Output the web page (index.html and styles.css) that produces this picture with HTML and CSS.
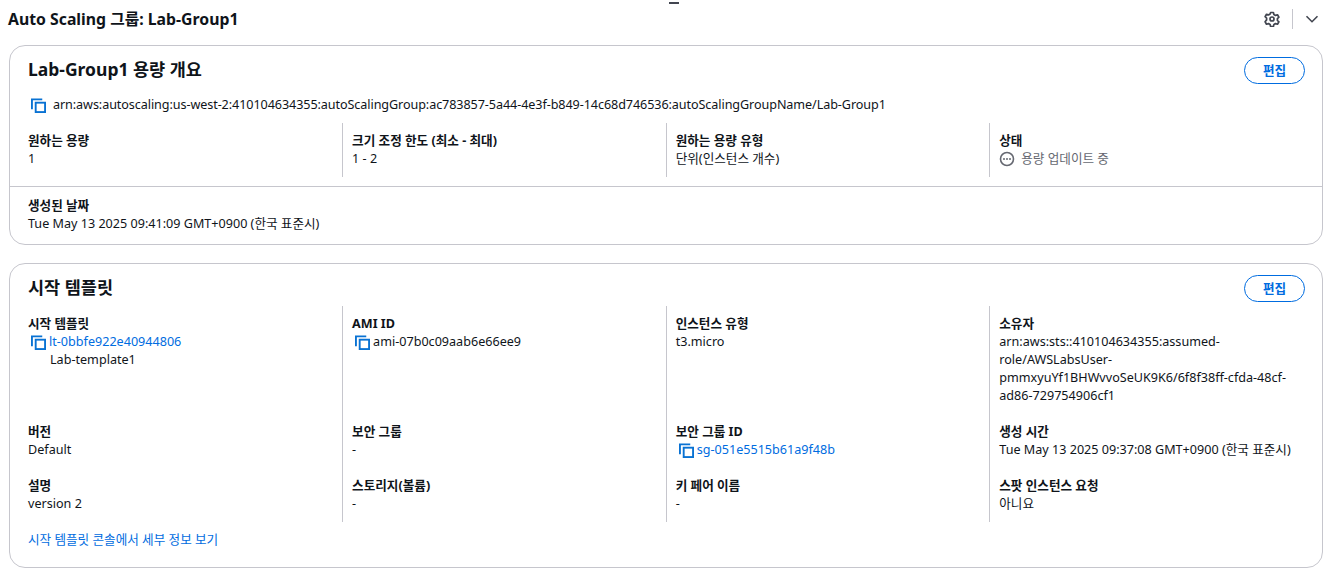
FILE: index.html
```html
<!DOCTYPE html>
<html lang="ko">
<head>
<meta charset="utf-8">
<title>Auto Scaling 그룹</title>
<link rel="stylesheet" href="styles.css">
</head>
<body>
<div class="handle"></div>
<header class="topbar">
  <h1>Auto Scaling 그룹: Lab-Group1</h1>
  <div class="tools">
    <svg class="gear" viewBox="0 0 16 16" width="16" height="16"><path d="M6.6 1.5h2.8l.5 2 1.6.9 2-.6 1.4 2.4-1.5 1.4v1.8l1.5 1.4-1.4 2.4-2-.6-1.6.9-.5 2H6.6l-.5-2-1.6-.9-2 .6-1.4-2.4L2.6 8.9V7.1L1.1 5.7l1.4-2.4 2 .6 1.6-.9z" fill="none" stroke="#424650" stroke-width="1.7" stroke-linejoin="round"/><circle cx="8" cy="8" r="2" fill="none" stroke="#424650" stroke-width="1.7"/></svg>
    <span class="tool-sep"></span>
    <svg class="chev" viewBox="0 0 16 16" width="16" height="16"><path d="M2.5 5.2 8 10.7l5.5-5.5" fill="none" stroke="#424650" stroke-width="1.6"/></svg>
  </div>
</header>

<section class="card">
  <div class="card-head">
    <h2>Lab-Group1 용량 개요</h2>
    <button class="btn">편집</button>
  </div>
  <div class="arn">
    <svg class="copy" viewBox="0 0 16 16"><path d="M1 12V1.5h11" fill="none" stroke="#0972d3" stroke-width="2"/><rect x="5" y="5" width="10" height="10" fill="none" stroke="#0972d3" stroke-width="2"/></svg>
    <span>arn:aws:autoscaling:us-west-2:410104634355:autoScalingGroup:ac783857-5a44-4e3f-b849-14c68d746536:autoScalingGroupName/Lab-Group1</span>
  </div>
  <div class="grid summary">
    <div class="cell"><div class="label">원하는 용량</div><div>1</div></div>
    <div class="cell"><div class="label">크기 조정 한도 (최소 - 최대)</div><div>1 - 2</div></div>
    <div class="cell"><div class="label">원하는 용량 유형</div><div>단위(인스턴스 개수)</div></div>
    <div class="cell"><div class="label">상태</div>
      <div class="status"><svg viewBox="0 0 16 16" width="16" height="16"><circle cx="8" cy="8" r="6.5" fill="none" stroke="#656871" stroke-width="1.6"/><circle cx="5" cy="8" r="1" fill="#656871"/><circle cx="8" cy="8" r="1" fill="#656871"/><circle cx="11" cy="8" r="1" fill="#656871"/></svg><span>용량 업데이트 중</span></div></div>
  </div>
  <div class="created">
    <div class="label">생성된 날짜</div>
    <div>Tue May 13 2025 09:41:09 GMT+0900 (한국 표준시)</div>
  </div>
</section>

<section class="card second">
  <div class="card-head">
    <h2>시작 템플릿</h2>
    <button class="btn">편집</button>
  </div>
  <div class="grid template">
    <div class="cell"><div class="label">시작 템플릿</div>
      <div class="copyline"><svg class="copy" viewBox="0 0 16 16"><path d="M1 12V1.5h11" fill="none" stroke="#0972d3" stroke-width="2"/><rect x="5" y="5" width="10" height="10" fill="none" stroke="#0972d3" stroke-width="2"/></svg><a href="#">lt-0bbfe922e40944806</a></div>
      <div class="sub">Lab-template1</div></div>
    <div class="cell"><div class="label">AMI ID</div>
      <div class="copyline"><svg class="copy" viewBox="0 0 16 16"><path d="M1 12V1.5h11" fill="none" stroke="#0972d3" stroke-width="2"/><rect x="5" y="5" width="10" height="10" fill="none" stroke="#0972d3" stroke-width="2"/></svg><span>ami-07b0c09aab6e66ee9</span></div></div>
    <div class="cell"><div class="label">인스턴스 유형</div><div>t3.micro</div></div>
    <div class="cell"><div class="label">소유자</div><div class="owner">arn:aws:sts::410104634355:assumed-role/AWSLabsUser-pmmxyuYf1BHWvvoSeUK9K6/6f8f38ff-cfda-48cf-ad86-729754906cf1</div></div>

    <div class="cell"><div class="label">버전</div><div>Default</div></div>
    <div class="cell"><div class="label">보안 그룹</div><div>-</div></div>
    <div class="cell"><div class="label">보안 그룹 ID</div>
      <div class="copyline"><svg class="copy" viewBox="0 0 16 16"><path d="M1 12V1.5h11" fill="none" stroke="#0972d3" stroke-width="2"/><rect x="5" y="5" width="10" height="10" fill="none" stroke="#0972d3" stroke-width="2"/></svg><a href="#">sg-051e5515b61a9f48b</a></div></div>
    <div class="cell"><div class="label">생성 시간</div><div>Tue May 13 2025 09:37:08 GMT+0900 (한국 표준시)</div></div>

    <div class="cell"><div class="label">설명</div><div>version 2</div></div>
    <div class="cell"><div class="label">스토리지(볼륨)</div><div>-</div></div>
    <div class="cell"><div class="label">키 페어 이름</div><div>-</div></div>
    <div class="cell"><div class="label">스팟 인스턴스 요청</div><div>아니요</div></div>
  </div>
  <a class="console" href="#">시작 템플릿 콘솔에서 세부 정보 보기</a>
</section>
</body>
</html>
```
FILE: styles.css
```css
* { box-sizing: border-box; }
html, body { margin: 0; padding: 0; }
body {
  background: #fff;
  color: #0f141a;
  font-family: "Noto Sans", "Noto Sans CJK KR", sans-serif;
  font-size: 12.6px;
  line-height: 18px;
  height: 570px;
  overflow: hidden;
  position: relative;
}
.handle {
  position: absolute;
  left: 669px;
  top: 2px;
  width: 10px;
  height: 2px;
  background: #424650;
}
.topbar {
  display: flex;
  align-items: center;
  justify-content: space-between;
  height: 38px;
  padding: 0 11px 0 8px;
}
h1 { margin: 0; font-size: 15.8px; font-weight: 700; line-height: 20px; }
.tools { display: flex; align-items: center; }
.gear { display: block; }
.tool-sep { width: 1px; height: 20px; background: #c6c6cd; margin: 0 11px 0 12px; }
.chev { display: block; }
.card {
  margin: 7px 8px 0 9px;
  height: 200px;
  border: 1px solid #c6c6cd;
  border-radius: 16px;
  background: #fff;
}
.second { margin-top: 18px; height: 305px; }
.card-head {
  display: flex;
  justify-content: space-between;
  align-items: flex-start;
  padding: 11px 17px 0 18px;
}
h2 { margin: 0; font-size: 17.5px; font-weight: 700; line-height: 24px; }
.btn {
  width: 61px;
  height: 27px;
  border: 1px solid #006ce0;
  border-radius: 14px;
  background: #fff;
  color: #006ce0;
  font: 700 12.6px/18px "Noto Sans", "Noto Sans CJK KR", sans-serif;
  padding: 0;
}
.arn {
  display: flex;
  align-items: center;
  gap: 7px;
  padding: 0 18px 0 21px;
  margin-top: 12px;
  height: 18px;
  letter-spacing: -0.08px;
}
.grid { display: grid; grid-template-columns: repeat(4, 323.6px); padding-left: 8.5px; }
.summary { margin-top: 9px; }
.template { margin-top: 4px; }
.cell { padding: 0 10px 18px 9px; border-left: 1px solid #c6c6cd; min-width: 0; }
.cell:nth-child(4n+1) { border-left: 0; padding-left: 9.5px; }
.summary .cell { padding-top: 9px; padding-bottom: 9px; }
.template .cell:nth-child(-n+4) { padding-top: 9px; }
.template .cell:nth-last-child(-n+4) { padding-bottom: 9px; }
.label { font-weight: 700; }
.created { margin-top: 9px; border-top: 1px solid #c6c6cd; padding: 10px 18px 0; }
.copyline { display: flex; align-items: center; gap: 3px; margin-left: 3px; }
.copy { display: block; flex: none; width: 15px; height: 15px; }
.sub { margin-left: 22px; }
.owner { width: 300px; overflow-wrap: anywhere; }
.status { display: flex; align-items: center; gap: 6px; color: #656871; }
a { color: #006ce0; text-decoration: none; }
.console { display: block; margin: 9px 0 0 18px; }
```
